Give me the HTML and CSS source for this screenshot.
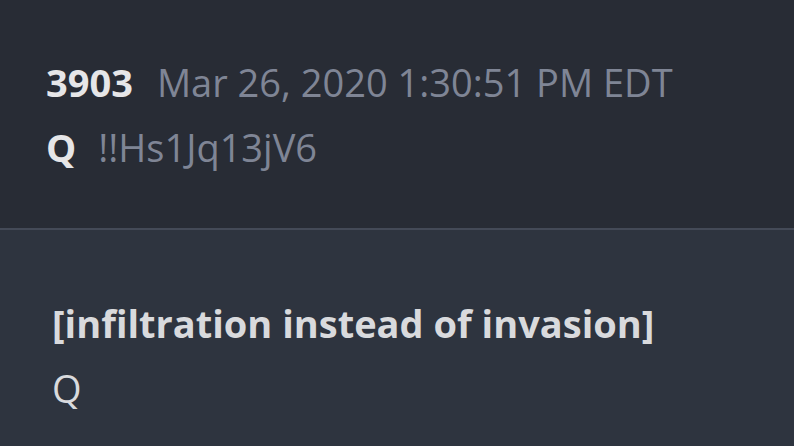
FILE: index.html
```html
<!DOCTYPE html>
<html>
<head>
<meta charset="utf-8">
<link rel="stylesheet" href="styles.css">
</head>
<body>
<div class="post">
  <header class="post-header">
    <div class="row"><span class="num">3903</span><span class="meta">Mar 26, 2020 1:30:51 PM EDT</span></div>
    <div class="row"><span class="name">Q</span><span class="trip">!!Hs1Jq13jV6</span></div>
  </header>
  <section class="post-body">
    <div class="line strong">[infiltration instead of invasion]</div>
    <div class="line">Q</div>
  </section>
</div>
</body>
</html>
```
FILE: styles.css
```css
html, body {
  margin: 0;
  padding: 0;
  background: #2e343f;
  font-family: "Open Sans", "DejaVu Sans", sans-serif;
  font-size: 38px;
  line-height: 65px;
  overflow: hidden;
}
.post {
  width: 794px;
  height: 446px;
  display: flex;
  flex-direction: column;
}
.post-header {
  background: #282c35;
  padding: 50px 0 48px 46px;
  border-bottom: 2px solid #444a57;
}
.row {
  display: flex;
  white-space: nowrap;
}
.num, .name {
  font-weight: 700;
  color: #e6e6e8;
}
.num { margin-right: 24px; }
.name { margin-right: 22px; }
.meta, .trip {
  color: #7f8595;
}
.post-body {
  flex: 1;
  background: #2e343f;
  padding: 61px 0 0 52px;
}
.line {
  color: #d9dadd;
  white-space: nowrap;
}
.strong {
  font-weight: 700;
}
```
